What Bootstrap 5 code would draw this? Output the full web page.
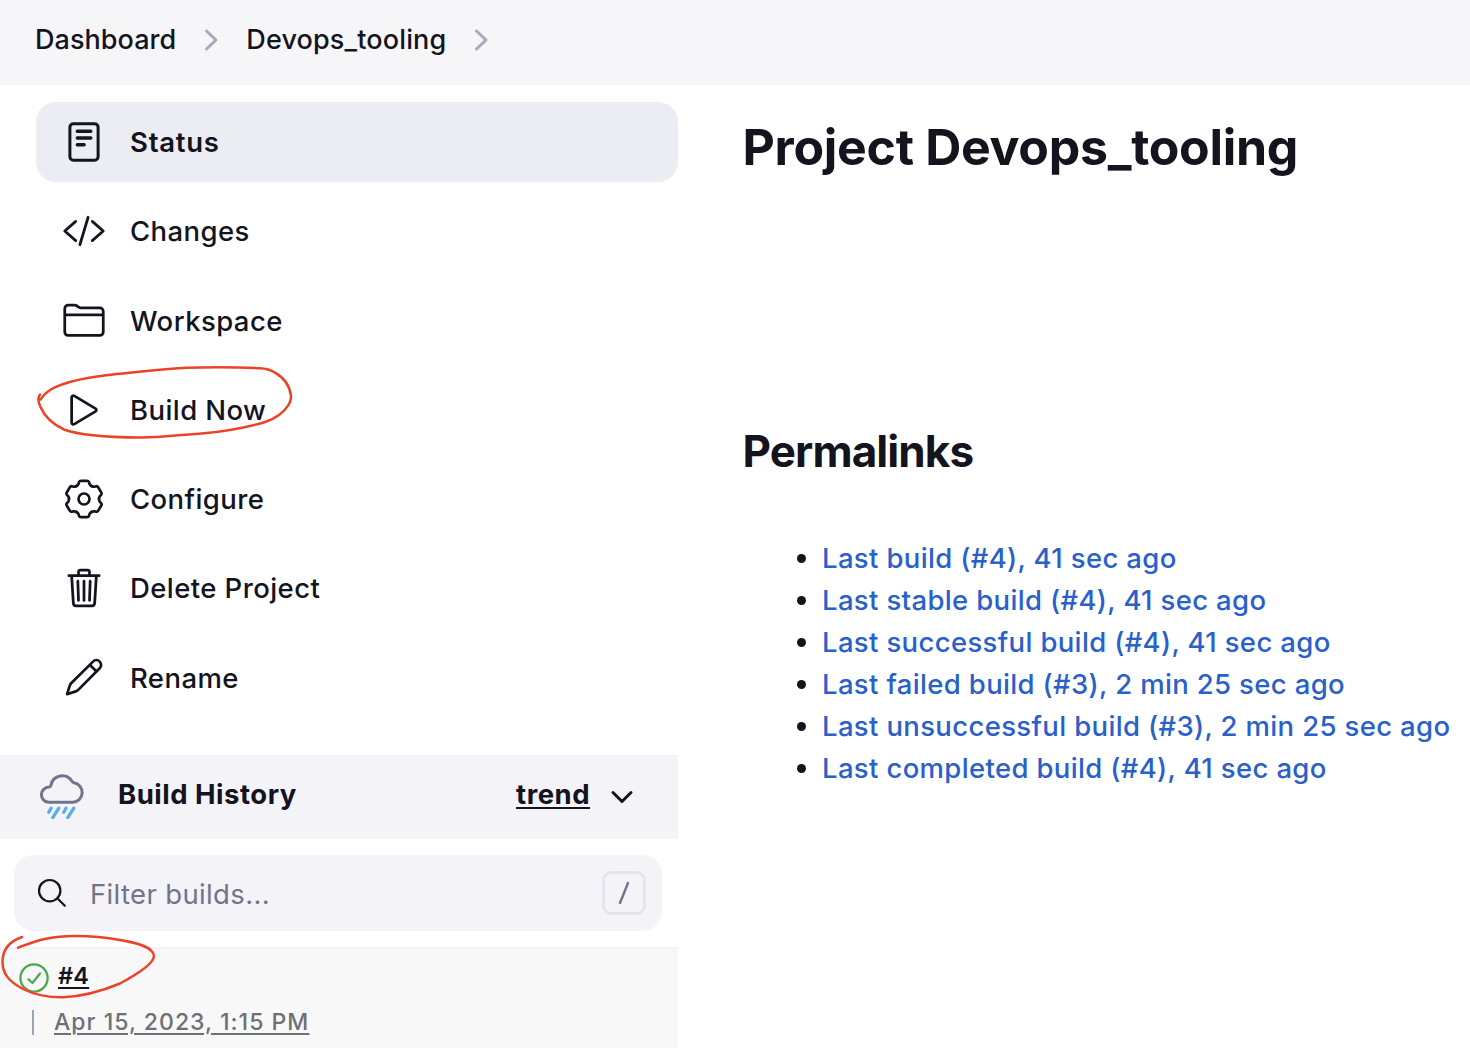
<!DOCTYPE html>
<html lang="en">
<head>
<meta charset="utf-8">
<title>Devops_tooling [Jenkins]</title>
<meta name="viewport" content="width=device-width, initial-scale=1">
<link rel="stylesheet" href="https://cdn.jsdelivr.net/npm/bootstrap@5.3.0/dist/css/bootstrap.min.css">
<style>
  :root { --ink: #14141f; --muted: #73738c; --panel: #f3f3f8; --jlink: #2960ca; }
  body { font-family: Inter, "Liberation Sans", sans-serif; color: var(--ink); font-size: 27.5px; line-height: 42px; height: 1048px; letter-spacing: .42px; }
  a { color: inherit; }
  .crumb-bar { height: 85px; background: #f6f6f8; padding: 0 0 5px 35px; font-size: 27px; font-weight: 450; letter-spacing: .05px; }
  .crumb-bar a + svg + a { letter-spacing: .15px; }
  .side { width: 678px; }
  .task-list { padding: 17px 0 0 36px; gap: 9.3px; }
  .task { height: 80px; padding-left: 26px; gap: 24px; border-radius: 20px; font-weight: 500; letter-spacing: .42px; }
  .task.current { background: #ecedf3; font-weight: 600; letter-spacing: .75px; }
  .ico { width: 44px; height: 44px; fill: none; stroke: currentColor; stroke-width: 32; stroke-linecap: round; stroke-linejoin: round; flex: none; }
  .history-head { height: 84px; margin-top: 37px; padding: 0 44px 3px 38px; background: var(--panel); font-weight: 700; letter-spacing: .5px; }
  .history-title { margin-left: 32px; }
  .history-head > a, .history-title { margin-top: -2px; }
  .history-head a, .build-row a { text-underline-offset: 3px; text-decoration-thickness: 2px; }
  .build-filter { height: 76px; margin: 16px 16px 0 14px; padding: 0 16px 0 22px; border-radius: 20px; background: var(--panel); color: var(--muted); letter-spacing: .35px; }
  .filter-text { padding: 2px 0 0 22px; }
  .key-hint { width: 44px; height: 44px; border: 3px solid #e4e4ee; border-radius: 9px; }
  .build-row { margin-top: 16px; height: 101px; padding: 8px 0 0 19px; border-top: 2px solid var(--panel); background: #f8f8f8; letter-spacing: .2px; }
  .build-top { gap: 9px; height: 42px; }
  .build-num { font-size: 23.5px; font-weight: 600; padding-bottom: 3px; }
  .build-when { gap: 20px; padding: 2px 0 0 13px; }
  .tick-bar { width: 2px; height: 25px; background: #98a5b3; margin-top: 2px; }
  .build-date { font-size: 23px; font-weight: 500; color: #6f6f76; letter-spacing: 1.03px; }
  .main-pane { padding: 32px 0 0 64.500px; }
  h1 { font-size: 50px; font-weight: 700; line-height: 60px; margin: 0; letter-spacing: -.3px; }
  h2 { font-size: 44px; font-weight: 700; line-height: 54px; margin: 247px 0 0; letter-spacing: -.9px; }
  .permalinks { margin: 59px 0 0; padding-left: 79px; font-weight: 500; letter-spacing: .35px; }
  .permalinks li { padding-left: .5px; }
  .permalinks a { color: var(--jlink); }
  .pen-marks { pointer-events: none; fill: none; stroke: #ec4327; stroke-width: 2.5; stroke-linecap: round; stroke-linejoin: round; }
</style>
</head>
<body class="bg-white overflow-hidden position-relative">
<nav class="crumb-bar d-flex align-items-center">
  <a class="text-decoration-none" href="#">Dashboard</a>
  <svg class="crumb-sep" width="70" height="28" fill="none" stroke="#a9a9ba" stroke-width="3" stroke-linecap="round" stroke-linejoin="round"><path d="M30.500 5l9.500 9-9.500 9"/></svg>
  <a class="text-decoration-none" href="#">Devops_tooling</a>
  <svg class="crumb-sep" width="70" height="28" fill="none" stroke="#a9a9ba" stroke-width="3" stroke-linecap="round" stroke-linejoin="round"><path d="M30.500 5l9.500 9-9.500 9"/></svg>
</nav>
<div class="d-flex">
  <aside class="side flex-shrink-0">
    <div class="task-list d-flex flex-column">
      <a class="task current d-flex align-items-center text-decoration-none" href="#">
        <svg class="ico" viewBox="0 0 44 44"><g stroke-width="3"><rect x="7.900" y="3.800" width="28.200" height="36.400" rx="3.500"/><path d="M15.300 11.300h13.500M15.300 18h13.500M15.300 24.800h6.800" stroke-width="3.400"/></g></svg>
        <span>Status</span></a>
      <a class="task d-flex align-items-center text-decoration-none" href="#">
        <svg class="ico" viewBox="0 0 512 512"><path d="M160 368L32 256l128-112M352 368l128-112-128-112M304 96l-96 320"/></svg>
        <span>Changes</span></a>
      <a class="task d-flex align-items-center text-decoration-none" href="#">
        <svg class="ico" viewBox="0 8 512 512"><path d="M440 432H72a40 40 0 01-40-40V120a40 40 0 0140-40h75.890a40 40 0 0122.190 6.720l27.840 18.560a40 40 0 0022.190 6.720H440a40 40 0 0140 40v240a40 40 0 01-40 40zM32 192h448"/></svg>
        <span>Workspace</span></a>
      <a class="task d-flex align-items-center text-decoration-none" href="#">
        <svg class="ico" viewBox="0 0 512 512"><path d="M112 111v290c0 17.440 17 28.520 31 20.160l247.900-148.370c12.120-7.250 12.120-26.330 0-33.580L143 90.840c-14-8.360-31 2.720-31 20.160z"/></svg>
        <span>Build Now</span></a>
      <a class="task d-flex align-items-center text-decoration-none" href="#">
        <svg class="ico" viewBox="-22 -22 44 44"><g stroke-width="2.700"><circle r="5.500"/><path id="tooth" d="M-7.500-13Q-6.100-13.800-5.600-14.900L-4.900-17.100Q-4.500-18.200-3-18.200H3Q4.500-18.200 4.900-17.100L5.600-14.900Q6.100-13.800 7.500-13"/><use href="#tooth" transform="rotate(60)"/><use href="#tooth" transform="rotate(120)"/><use href="#tooth" transform="rotate(180)"/><use href="#tooth" transform="rotate(240)"/><use href="#tooth" transform="rotate(300)"/></g></svg>
        <span>Configure</span></a>
      <a class="task d-flex align-items-center text-decoration-none" href="#">
        <svg class="ico" viewBox="0 0 512 512"><path d="M112 112l20 320c.950 18.490 14.400 32 32 32h184c17.670 0 30.870-13.510 32-32l20-320M80 112h352M192 112V72a24 24 0 0124-24h80a24 24 0 0124 24v40M256 176v224M184 176l8 224M328 176l-8 224"/></svg>
        <span>Delete Project</span></a>
      <a class="task d-flex align-items-center text-decoration-none" href="#">
        <svg class="ico" viewBox="0 0 44 44"><path stroke-width="2.700" d="M5.100 38.200L7.700 29.800q.5-1.600 1.700-2.800L31 5.600a4.700 4.700 0 016.700 6.700L16.500 33.600q-1.200 1.200-2.800 1.800zM28 9l6.300 6.300"/></svg>
        <span>Rename</span></a>
    </div>
    <div class="history-head d-flex align-items-center">
      <svg width="48" height="48" viewBox="0 0 48 48" fill="none" stroke-linecap="round" stroke-linejoin="round"><path d="M11 31.300a7.600 7.600 0 010-15.200q1.700-.3 2-2.200A11.500 11.500 0 0134 10.200q.6 1.300 1.800 1.600A9.800 9.800 0 0134.500 31.300z" stroke="#73738c" stroke-width="3"/><path d="M13 37.300l-2.200 4M20.800 37.200l-6 9.500M28 37.300l-2.200 4M35.800 37.200l-6 9.500" stroke="#5aaee8" stroke-width="3.300"/></svg>
      <span class="history-title flex-grow-1">Build History</span>
      <a href="#">trend</a>
      <svg class="ms-3" width="28" height="24" fill="none" stroke="#14141f" stroke-width="3" stroke-linecap="round" stroke-linejoin="round"><path d="M7 9.500l9 9 9-9"/></svg>
    </div>
    <div class="build-filter d-flex align-items-center">
      <svg width="32" height="32" viewBox="0 0 32 32" fill="none" stroke="#14141f" stroke-width="2.200" stroke-linecap="round"><circle cx="13.700" cy="13.700" r="10.700"/><path d="M21.300 21.300l7.500 7.500"/></svg>
      <span class="filter-text flex-grow-1">Filter builds...</span>
      <span class="key-hint d-flex align-items-center justify-content-center"><svg width="16" height="26" fill="none" stroke="#73738c" stroke-width="2.400" stroke-linecap="round"><path d="M12 3l-8 20"/></svg></span>
    </div>
    <div class="build-row">
      <div class="build-top d-flex align-items-center">
        <svg width="30" height="30" viewBox="0 0 30 30" fill="none" stroke="#4ba853" stroke-width="2.300" stroke-linecap="round" stroke-linejoin="round"><circle cx="15" cy="15" r="13.600"/><path d="M9.500 16.300l4 3.700 7.500-9.500"/></svg>
        <a class="build-num" href="#">#4</a>
      </div>
      <div class="build-when d-flex align-items-center"><span class="tick-bar"></span><a class="build-date" href="#">Apr 15, 2023, 1:15 PM</a></div>
    </div>
  </aside>
  <main class="main-pane flex-grow-1 text-nowrap">
    <h1>Project Devops_tooling</h1>
    <h2>Permalinks</h2>
    <ul class="permalinks">
      <li><a class="text-decoration-none" href="#">Last build (#4), 41 sec ago</a></li>
      <li><a class="text-decoration-none" href="#">Last stable build (#4), 41 sec ago</a></li>
      <li><a class="text-decoration-none" href="#">Last successful build (#4), 41 sec ago</a></li>
      <li><a class="text-decoration-none" href="#">Last failed build (#3), 2 min 25 sec ago</a></li>
      <li><a class="text-decoration-none" href="#">Last unsuccessful build (#3), 2 min 25 sec ago</a></li>
      <li><a class="text-decoration-none" href="#">Last completed build (#4), 41 sec ago</a></li>
    </ul>
  </main>
</div>
<!-- hand-drawn circles around Build Now and build #4 -->
<svg class="pen-marks position-absolute top-0 start-0" width="680" height="1048">
  <path d="M40 394.500C38 397 38 402 40.500 407C44 415 52 424 64 429.500C80 435.500 108 437.300 140 437.600C165 437.500 172 435.500 182 435C205 433.800 225 431.500 243 427.500C262 423.500 271 421 279 415C288 408 291.500 402 291 396C290 386 284 378 275 372.700C270 369.500 266 368.500 260 368.300C240 367.300 205 367.300 187 367.700C170 368.700 120 373 97 376.500C80 379 60 384 50 390C45 393 43 396 40.500 399.500"/>
  <path d="M22 937C9 941.500 2.500 950 2.500 962C2.500 973 8 981 23 989C35 995 48 997.500 63 997.300C80 996.500 102 991 120 983.500C132 977 154 964 154 956C153 947 138 943 120 940C105 937.200 90 936 76 936C50 936 38 940 18 947.700"/>
</svg>
<script src="https://cdn.jsdelivr.net/npm/bootstrap@5.3.0/dist/js/bootstrap.bundle.min.js"></script>
</body>
</html>
